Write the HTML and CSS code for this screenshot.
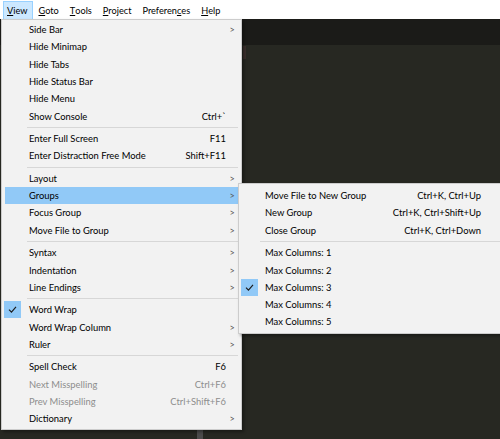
FILE: index.html
```html
<!DOCTYPE html>
<html lang="en">
<head>
    <meta charset="UTF-8">
    <meta name="viewport" content="width=device-width, initial-scale=1.0">
    <title>View menu</title>
    <link rel="stylesheet" href="styles.css">
</head>
<body>
    <!-- Barra de menu -->
    <div class="menubar">
        <span class="menubar-item active"><u>V</u>iew</span>
        <span class="menubar-item"><u>G</u>oto</span>
        <span class="menubar-item"><u>T</u>ools</span>
        <span class="menubar-item"><u>P</u>roject</span>
        <span class="menubar-item">Preferen<u>c</u>es</span>
        <span class="menubar-item"><u>H</u>elp</span>
    </div>

    <!-- Editor ao fundo -->
    <div class="workspace">
        <div class="tabbar"></div>
        <div class="editor">
            <div class="tab-mark"></div>
            <div class="scroll-mark"></div>
        </div>
    </div>

    <!-- Menu View -->
    <div class="menu main-menu">
        <div class="item"><span class="check"></span><span class="label">Side Bar</span><span class="key"></span><span class="arrow">&gt;</span></div>
        <div class="item"><span class="check"></span><span class="label">Hide Minimap</span><span class="key"></span><span class="arrow"></span></div>
        <div class="item"><span class="check"></span><span class="label">Hide Tabs</span><span class="key"></span><span class="arrow"></span></div>
        <div class="item"><span class="check"></span><span class="label">Hide Status Bar</span><span class="key"></span><span class="arrow"></span></div>
        <div class="item"><span class="check"></span><span class="label">Hide Menu</span><span class="key"></span><span class="arrow"></span></div>
        <div class="item"><span class="check"></span><span class="label">Show Console</span><span class="key">Ctrl+`</span><span class="arrow"></span></div>
        <div class="sep"></div>
        <div class="item"><span class="check"></span><span class="label">Enter Full Screen</span><span class="key">F11</span><span class="arrow"></span></div>
        <div class="item"><span class="check"></span><span class="label">Enter Distraction Free Mode</span><span class="key">Shift+F11</span><span class="arrow"></span></div>
        <div class="sep"></div>
        <div class="item"><span class="check"></span><span class="label">Layout</span><span class="key"></span><span class="arrow">&gt;</span></div>
        <div class="item hover"><span class="check"></span><span class="label">Groups</span><span class="key"></span><span class="arrow">&gt;</span></div>
        <div class="item"><span class="check"></span><span class="label">Focus Group</span><span class="key"></span><span class="arrow">&gt;</span></div>
        <div class="item"><span class="check"></span><span class="label">Move File to Group</span><span class="key"></span><span class="arrow">&gt;</span></div>
        <div class="sep"></div>
        <div class="item"><span class="check"></span><span class="label">Syntax</span><span class="key"></span><span class="arrow">&gt;</span></div>
        <div class="item"><span class="check"></span><span class="label">Indentation</span><span class="key"></span><span class="arrow">&gt;</span></div>
        <div class="item"><span class="check"></span><span class="label">Line Endings</span><span class="key"></span><span class="arrow">&gt;</span></div>
        <div class="sep"></div>
        <div class="item checked"><span class="check"><svg viewBox="0 0 10 8" width="9" height="7"><path d="M1 4.2 L3.8 7 L9 1" fill="none" stroke="#1a1a1a" stroke-width="1.3"/></svg></span><span class="label">Word Wrap</span><span class="key"></span><span class="arrow"></span></div>
        <div class="item"><span class="check"></span><span class="label">Word Wrap Column</span><span class="key"></span><span class="arrow">&gt;</span></div>
        <div class="item"><span class="check"></span><span class="label">Ruler</span><span class="key"></span><span class="arrow">&gt;</span></div>
        <div class="sep"></div>
        <div class="item"><span class="check"></span><span class="label">Spell Check</span><span class="key">F6</span><span class="arrow"></span></div>
        <div class="item disabled"><span class="check"></span><span class="label">Next Misspelling</span><span class="key">Ctrl+F6</span><span class="arrow"></span></div>
        <div class="item disabled"><span class="check"></span><span class="label">Prev Misspelling</span><span class="key">Ctrl+Shift+F6</span><span class="arrow"></span></div>
        <div class="item"><span class="check"></span><span class="label">Dictionary</span><span class="key"></span><span class="arrow">&gt;</span></div>
    </div>

    <!-- Submenu Groups -->
    <div class="menu sub-menu">
        <div class="item"><span class="check"></span><span class="label">Move File to New Group</span><span class="key">Ctrl+K, Ctrl+Up</span><span class="arrow"></span></div>
        <div class="item"><span class="check"></span><span class="label">New Group</span><span class="key">Ctrl+K, Ctrl+Shift+Up</span><span class="arrow"></span></div>
        <div class="item"><span class="check"></span><span class="label">Close Group</span><span class="key">Ctrl+K, Ctrl+Down</span><span class="arrow"></span></div>
        <div class="sep"></div>
        <div class="item"><span class="check"></span><span class="label">Max Columns: 1</span><span class="key"></span><span class="arrow"></span></div>
        <div class="item"><span class="check"></span><span class="label">Max Columns: 2</span><span class="key"></span><span class="arrow"></span></div>
        <div class="item checked"><span class="check"><svg viewBox="0 0 10 8" width="9" height="7"><path d="M1 4.2 L3.8 7 L9 1" fill="none" stroke="#1a1a1a" stroke-width="1.3"/></svg></span><span class="label">Max Columns: 3</span><span class="key"></span><span class="arrow"></span></div>
        <div class="item"><span class="check"></span><span class="label">Max Columns: 4</span><span class="key"></span><span class="arrow"></span></div>
        <div class="item"><span class="check"></span><span class="label">Max Columns: 5</span><span class="key"></span><span class="arrow"></span></div>
    </div>
</body>
</html>
```

FILE: styles.css
```css
* {
    margin: 0;
    padding: 0;
    box-sizing: border-box;
}

body {
    width: 500px;
    height: 439px;
    overflow: hidden;
    position: relative;
    background-color: #272822;
    font-family: Lato, sans-serif;
    font-size: 9.4px;
    color: #000;
}

/* Barra de menu */
.menubar {
    height: 19px;
    background: #fff;
    display: flex;
    align-items: stretch;
    padding: 1px 0 0 3px;
    font-size: 9.2px;
}

.menubar-item {
    display: flex;
    align-items: center;
    padding: 0 5px 0 3px;
    margin-right: 1px;
    border: 1px solid transparent;
    border-bottom: none;
}

.menubar-item u {
    text-decoration-thickness: 1px;
    text-underline-offset: 1px;
}

.menubar-item.active {
    background: #cce8ff;
    border-color: #99d1ff;
}

/* Editor */
.workspace {
    height: 420px;
    display: flex;
    flex-direction: column;
}

.tabbar {
    height: 26px;
    background: #1b1b18;
}

.editor {
    flex: 1;
    position: relative;
    background: #272822;
}

.tab-mark {
    position: absolute;
    left: 243px;
    top: 1px;
    width: 3px;
    height: 13px;
    background: #3a2f2c;
}

.scroll-mark {
    position: absolute;
    left: 197px;
    bottom: 0;
    width: 6px;
    height: 12px;
    background: #4b4b4b;
}

/* Menus */
.menu {
    position: absolute;
    background: #f2f2f2;
    border: 1px solid #cccccc;
    box-shadow: 2px 2px 3px rgba(0, 0, 0, 0.35);
}

.main-menu {
    top: 19px;
    left: 1px;
    width: 241px;
    padding: 1px 3px 2px;
}

.sub-menu {
    top: 183px;
    left: 238px;
    width: 275px;
    padding: 3px 3px 2px;
}

.item {
    display: grid;
    grid-template-columns: 24px 1fr auto 12px;
    align-items: center;
    height: 17.3px;
    white-space: nowrap;
}

.sub-menu .item {
    grid-template-columns: 23px 1fr auto 28px;
}

.item.hover {
    background: #91c9f7;
}

.item.disabled {
    color: #8d8d8d;
}

.check {
    width: 17px;
    height: 17px;
    margin-left: -1px;
    display: flex;
    align-items: center;
    justify-content: center;
}

.item.checked .check {
    background: #91c9f7;
}

.key {
    text-align: right;
}

.arrow {
    text-align: center;
    font-size: 9px;
    color: #555;
}

.sep {
    height: 1px;
    margin: 2px 0 2.2px 22px;
    background: #d7d7d7;
}

.sub-menu .sep {
    margin-left: 18px;
}
```
